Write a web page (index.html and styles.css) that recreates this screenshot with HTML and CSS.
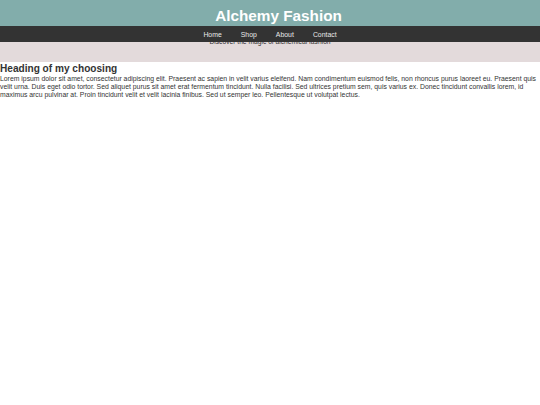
FILE: index.html
```html
<!DOCTYPE html>
<html lang="en">
<head>
<meta charset="utf-8">
<title>Alchemy Fashion</title>
<link rel="stylesheet" href="styles.css">
</head>
<body>
<header class="top">
  <h1 class="brand">Alchemy Fashion</h1>
</header>
<nav class="menu">
  <a class="menu-link" href="#">Home</a>
  <a class="menu-link" href="#">Shop</a>
  <a class="menu-link" href="#">About</a>
  <a class="menu-link" href="#">Contact</a>
</nav>
<section class="hero">
  <p class="tagline">Discover the magic of alchemical fashion</p>
</section>
<main class="content">
  <h2 class="heading">Heading of my choosing</h2>
  <p class="text">Lorem ipsum dolor sit amet, consectetur adipiscing elit. Praesent ac sapien in velit varius eleifend. Nam condimentum euismod felis, non rhoncus purus laoreet eu. Praesent quis velit urna. Duis eget odio tortor. Sed aliquet purus sit amet erat fermentum tincidunt. Nulla facilisi. Sed ultrices pretium sem, quis varius ex. Donec tincidunt convallis lorem, id maximus arcu pulvinar at. Proin tincidunt velit et velit lacinia finibus. Sed ut semper leo. Pellentesque ut volutpat lectus.</p>
</main>
</body>
</html>
```
FILE: styles.css
```css
html, body {
  margin: 0;
  padding: 0;
  background: #ffffff;
  font-family: "Liberation Sans", Arial, sans-serif;
}
.top {
  background: #82adab;
  height: 26px;
  box-sizing: border-box;
  padding-top: 7px;
}
.brand {
  margin: 0;
  padding-left: 17px;
  text-align: center;
  color: #ffffff;
  font-size: 15.3px;
  line-height: 17px;
  font-weight: bold;
}
.menu {
  position: relative;
  z-index: 2;
  background: #333333;
  height: 16px;
  display: flex;
  justify-content: center;
  align-items: center;
}
.menu-link {
  color: #e8e8e8;
  text-decoration: none;
  font-size: 6.9px;
  padding: 0 9.5px;
}
.hero {
  position: relative;
  z-index: 1;
  background: #e3dadb;
  margin-top: -4px;
  height: 24px;
  box-sizing: border-box;
}
.tagline {
  margin: 0;
  text-align: center;
  color: #333333;
  font-size: 6.7px;
  line-height: 8px;
}
.content {
  padding-top: 1px;
}
.heading {
  margin: 0;
  font-size: 10.1px;
  line-height: 12px;
  color: #333333;
}
.text {
  margin: 0;
  font-size: 6.85px;
  line-height: 8px;
  color: #333333;
}
```
